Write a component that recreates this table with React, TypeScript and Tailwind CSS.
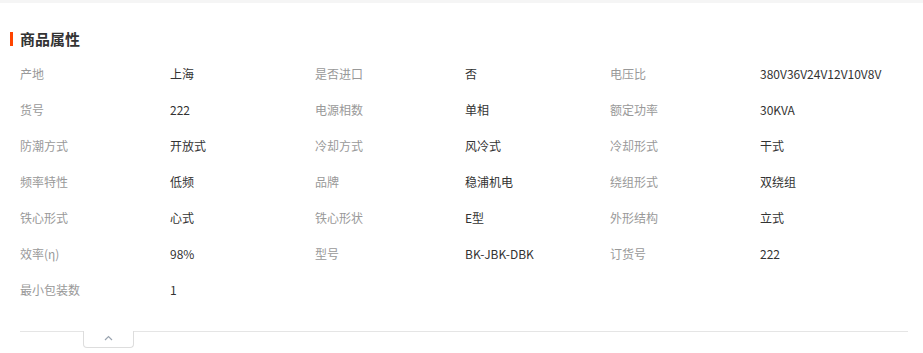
import React from "react";

const attrs: [string, string][] = [
  ["产地", "上海"],
  ["是否进口", "否"],
  ["电压比", "380V36V24V12V10V8V"],
  ["货号", "222"],
  ["电源相数", "单相"],
  ["额定功率", "30KVA"],
  ["防潮方式", "开放式"],
  ["冷却方式", "风冷式"],
  ["冷却形式", "干式"],
  ["频率特性", "低频"],
  ["品牌", "稳浦机电"],
  ["绕组形式", "双绕组"],
  ["铁心形式", "心式"],
  ["铁心形状", "E型"],
  ["外形结构", "立式"],
  ["效率(η)", "98%"],
  ["型号", "BK-JBK-DBK"],
  ["订货号", "222"],
  ["最小包装数", "1"],
];

export default function App() {
  return (
    <div
      className="w-[923px] h-[353px] bg-white overflow-hidden"
      style={{ fontFamily: '"Noto Sans CJK SC", "Noto Sans", sans-serif' }}
    >
      <div className="h-[3px] bg-[#f5f5f5]" />
      <div className="pl-[10px] pr-[15px]">
        <div className="mt-[26px] h-[20px] flex items-center">
          <span className="w-[3px] h-[14px] bg-[#ff4400]" />
          <span className="ml-[7px] text-[15px] leading-[20px] font-bold text-[#333]">
            商品属性
          </span>
        </div>
        <div className="mt-[7px] pl-[10px] grid grid-cols-3 w-[895px]">
          {attrs.map(([k, v]) => (
            <div key={k} className="flex h-[36px] items-center text-[12px] leading-[16px]">
              <span className="w-[150px] text-[#999]">{k}</span>
              <span className="text-[#333]">{v}</span>
            </div>
          ))}
        </div>
        <div className="mt-[23px] ml-[10px] w-[888px] border-t border-[#e5e5e5] relative">
          <div className="absolute left-[63px] top-[-1px] w-[51px] h-[17px] bg-white border border-t-0 border-[#ddd] rounded-b-[4px] flex items-start justify-center">
            <svg width="9" height="6" viewBox="0 0 9 6" className="mt-[4px]">
              <path d="M1 5 L4.5 1.5 L8 5" fill="none" stroke="#9aa4b0" strokeWidth="1.2" />
            </svg>
          </div>
        </div>
      </div>
    </div>
  );
}
